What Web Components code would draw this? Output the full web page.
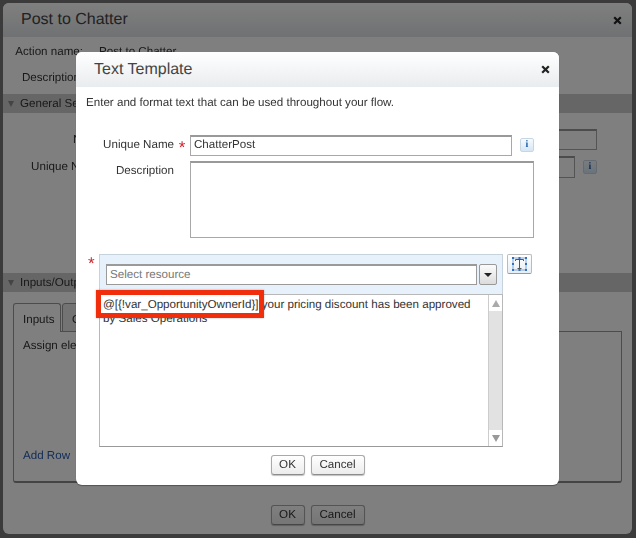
<!DOCTYPE html>
<html><head><meta charset="utf-8"><style>
html,body{margin:0;height:100%}
body{width:636px;height:538px;overflow:hidden;position:relative;background:#767676;font:11.6px/14px "Liberation Sans",Arial,sans-serif;color:#333;text-rendering:geometricPrecision;filter:blur(.35px)}
#scrim{position:absolute;inset:0;background:rgba(0,0,0,.5)}
</style></head><body>
<template id="t-btn"><style>
:host{display:inline-flex;align-items:center;justify-content:center;box-sizing:border-box;height:20px;width:var(--w,34px);border:1px solid #a9a9a9;border-bottom-color:#8c8c8c;border-radius:3px;background:linear-gradient(#fff,#ececec);color:#333;box-shadow:0 1px 1px rgba(0,0,0,.25)}
</style><slot></slot></template>
<template id="t-info"><style>
:host{display:inline-flex;align-items:center;justify-content:center;box-sizing:border-box;width:14px;height:14px;border:1px solid #c8d6e2;border-radius:2px;background:linear-gradient(#f6fbff,#d5e6f5);color:#1f5ea8;font:bold 10px/12px "Liberation Serif",serif}
</style>i</template>
<template id="t-x"><style>:host{display:block;width:9px;height:9px}svg{display:block}</style>
<svg width="9" height="9" viewBox="0 0 9 9"><path d="M1.2 1.2L7.8 7.8M7.8 1.2L1.2 7.8" stroke="#222" stroke-width="2.2" fill="none"/></svg></template>
<template id="t-window"><style>
:host{display:block;box-sizing:border-box;position:absolute;left:3px;top:3px;width:629px;height:531px;border-radius:6px;background:#fff;overflow:hidden;color:#333}
header{height:34px;box-sizing:border-box;padding:0 10px 0 18px;display:flex;align-items:center;justify-content:space-between;background:linear-gradient(#fff,#dfe3e5);font-size:16px;color:#444}
</style><header><span>Post to Chatter</span><x-close></x-close></header><slot></slot></template>
<template id="t-row"><style>
:host{display:flex;align-items:center;height:var(--h,26px)}
.l{width:var(--lw,81px);text-align:right;flex:none}
.v{margin-left:var(--gap,15px);flex:none;display:flex;align-items:center;gap:8px}
</style><span class="l"><slot name="label"></slot></span><span class="v"><slot></slot></span></template>
<template id="t-bar"><style>
:host{display:flex;align-items:center;gap:6px;height:19px;padding:1px 0 0 5px;box-sizing:border-box;background:#cdcdcd;color:#333}
i{width:0;height:0;border:3.500px solid transparent;border-top:6px solid #888;border-bottom:0}
</style><i></i><slot></slot></template>
<template id="t-tabs"><style>
:host{display:block;margin:11px 10px 0;height:181px;box-sizing:border-box;position:relative}
.tabs{display:flex;height:29px}
.tab{box-sizing:border-box;height:29px;padding:9px 9px 0;border:1px solid #999;border-radius:3px 3px 0 0;background:#fff}
.tab.o{background:#e6e6e6;margin-left:1px}
.tab:first-child{width:48px;border-bottom:0}
.panel{box-sizing:border-box;margin-top:-1px;height:152px;border:1px solid #999;border-bottom:2px solid #888;border-radius:0 0 3px 3px;padding:7px 9px;display:flex;flex-direction:column;justify-content:space-between;background:#fff}
a{color:#2a5db0;padding-bottom:11px}
</style><div class="tabs"><div class="tab">Inputs</div><div class="tab o">Outputs</div></div>
<div class="panel"><span>Assign elements</span><a>Add Row</a></div></template>
<template id="t-box"><style>
:host{display:block;box-sizing:border-box;background:#fff;border:1px solid #a8a8a8;border-top:2px solid #999;color:#333;padding:1px 3px;line-height:14px}
</style><slot></slot></template>
<template id="t-scroll"><style>
:host{display:flex;flex-direction:column;box-sizing:border-box;width:14px;height:100%;flex:none;background:#e2e2e2;border-left:1px solid #ccc}
.b{height:16px;background:#fff;display:flex;align-items:center;justify-content:center;flex:none}
.t{flex:1}
i{width:0;height:0;border:4px solid transparent}
.u i{border-bottom:7px solid #aaa;border-top:0}
.d i{border-top:7px solid #999;border-bottom:0}
</style><div class="b u"><i></i></div><div class="t"></div><div class="b d"><i></i></div></template>
<template id="t-editor"><style>
:host{display:block;position:relative;margin:16px 0 0 23px;width:433px}
.star{position:absolute;left:-11px;top:1px;color:#d2232a;font-size:17px;line-height:17px}
.panel{box-sizing:border-box;width:404px;height:41px;padding:9px 5px 0 6px;background:#e6f1fc;border:1px solid #c6d2dc;display:flex;gap:2px}
.sel{box-sizing:border-box;width:373px;height:21px;border:1px solid #9a9a9a;border-top-width:2px;background:#fff;color:#777;padding:2px 3px}
.dd{box-sizing:border-box;width:18px;height:21px;border:1px solid #999;border-radius:2px;background:linear-gradient(#fbfbfb,#dcdcdc);display:flex;align-items:center;justify-content:center}
.dd i{width:0;height:0;border:4px solid transparent;border-top:4px solid #222;border-bottom:0}
.tpl{position:absolute;left:408px;top:0;box-sizing:border-box;width:25px;height:20px;border:1px solid #bbb;border-bottom-color:#999;border-radius:2px;background:linear-gradient(#fff,#e6eef5);display:flex;align-items:center;justify-content:center}
.tpl svg{display:block}
.area{box-sizing:border-box;width:404px;height:153px;margin-top:-1px;border:1px solid #b8b8b8;border-bottom-color:#999;background:#fff;display:flex}
.txt{flex:1;padding:3px 14px 0 3px;color:#333;line-height:14px}
.mark{position:absolute;left:-3px;top:36px;box-sizing:border-box;width:168px;height:28px;border:5px solid #f12e0b;box-shadow:0 0 2px rgba(0,0,0,.3)}
</style><span class="star">*</span>
<div class="panel"><div class="sel">Select resource</div><div class="dd"><i></i></div></div>
<div class="tpl"><svg width="17" height="16" viewBox="0 0 17 16"><path d="M2 2H15V14H2Z" stroke="#7fa6d8" stroke-width="1" fill="none"/><path d="M1 1h2v2H1zM7.500 1h2v2h-2zM14 1h2v2h-2zM1 7h2v2H1zM14 7h2v2h-2zM1 13h2v2H1zM7.500 13h2v2h-2zM14 13h2v2h-2z" fill="#2f6fc4"/><path d="M4.500 5V3.500H12.500V5M8.500 3.500V12.500M6.500 12.500H10.500" stroke="#555" stroke-width="1" fill="none"/></svg></div>
<div class="area"><div class="txt">@[{!var_OpportunityOwnerId}] your pricing discount has been approved by Sales Operations</div><x-scroll></x-scroll></div>
<div class="mark"></div></template>
<template id="t-dialog"><style>
:host{display:block;position:absolute;left:76px;top:52px;width:483px;height:433px;border-radius:6px;background:#fff;box-shadow:0 1px 1px rgba(0,0,0,.35);color:#333;overflow:hidden}
header{height:35px;box-sizing:border-box;padding:0 9px 0 18px;display:flex;align-items:center;justify-content:space-between;background:linear-gradient(#fff,#e9ecee);font-size:16px;color:#444}
.intro{margin:9px 0 0 10px;height:14px}
.row{display:flex;margin-top:25px;height:20px;align-items:center}
.lbl{width:98px;text-align:right;flex:none}
.star{width:16px;text-align:center;color:#d2232a;font-size:17px;line-height:17px;flex:none;padding-top:5px}
.row2{display:flex;margin-top:6px}
.row2 .lbl{padding-top:3px;margin-right:16px}
.foot{display:flex;justify-content:center;gap:6px;margin-top:8px}
</style><header><span>Text Template</span><x-close></x-close></header>
<div class="intro">Enter and format text that can be used throughout your flow.</div>
<div class="row"><span class="lbl">Unique Name</span><span class="star">*</span><x-box style="width:322px;height:21px;margin-right:8px">ChatterPost</x-box><x-info></x-info></div>
<div class="row2"><span class="lbl">Description</span><x-box style="width:344px;height:77px"></x-box></div>
<x-editor></x-editor>
<div class="foot"><x-btn>OK</x-btn><x-btn style="--w:54px">Cancel</x-btn></div></template>

<x-window>
<div style="height:2px"></div>
<x-row style="--h:26px;--lw:80px;--gap:16px"><span slot="label">Action name:</span>Post to Chatter</x-row>
<x-row style="--h:26px;--lw:77px;--gap:19px"><span slot="label">Description</span></x-row>
<div style="height:3px"></div>
<x-bar>General Settings</x-bar>
<div style="height:16px"></div>
<x-row style="--h:21px;--lw:101px;--gap:11px"><span slot="label">Name</span><x-box style="width:482px;height:21px"></x-box></x-row>
<div style="height:6px"></div>
<x-row style="--h:22px;--lw:99px;--gap:13px"><span slot="label">Unique Name</span><x-box style="width:460px;height:22px"></x-box><x-info></x-info></x-row>
<div style="height:95px"></div>
<x-bar>Inputs/Outputs</x-bar>
<x-tabs></x-tabs>
<div style="display:flex;justify-content:center;gap:6px;margin-top:21px"><x-btn>OK</x-btn><x-btn style="--w:54px">Cancel</x-btn></div>
</x-window>
<div id="scrim"></div>
<x-dialog></x-dialog>
<script>
const reg=(n,t)=>customElements.define(n,class extends HTMLElement{constructor(){super();this.attachShadow({mode:'open'}).appendChild(document.getElementById(t).content.cloneNode(true))}});
[['x-btn','t-btn'],['x-info','t-info'],['x-close','t-x'],['x-window','t-window'],['x-row','t-row'],['x-bar','t-bar'],['x-tabs','t-tabs'],['x-box','t-box'],['x-scroll','t-scroll'],['x-editor','t-editor'],['x-dialog','t-dialog']].forEach(a=>reg(...a));
</script>
</body></html>
